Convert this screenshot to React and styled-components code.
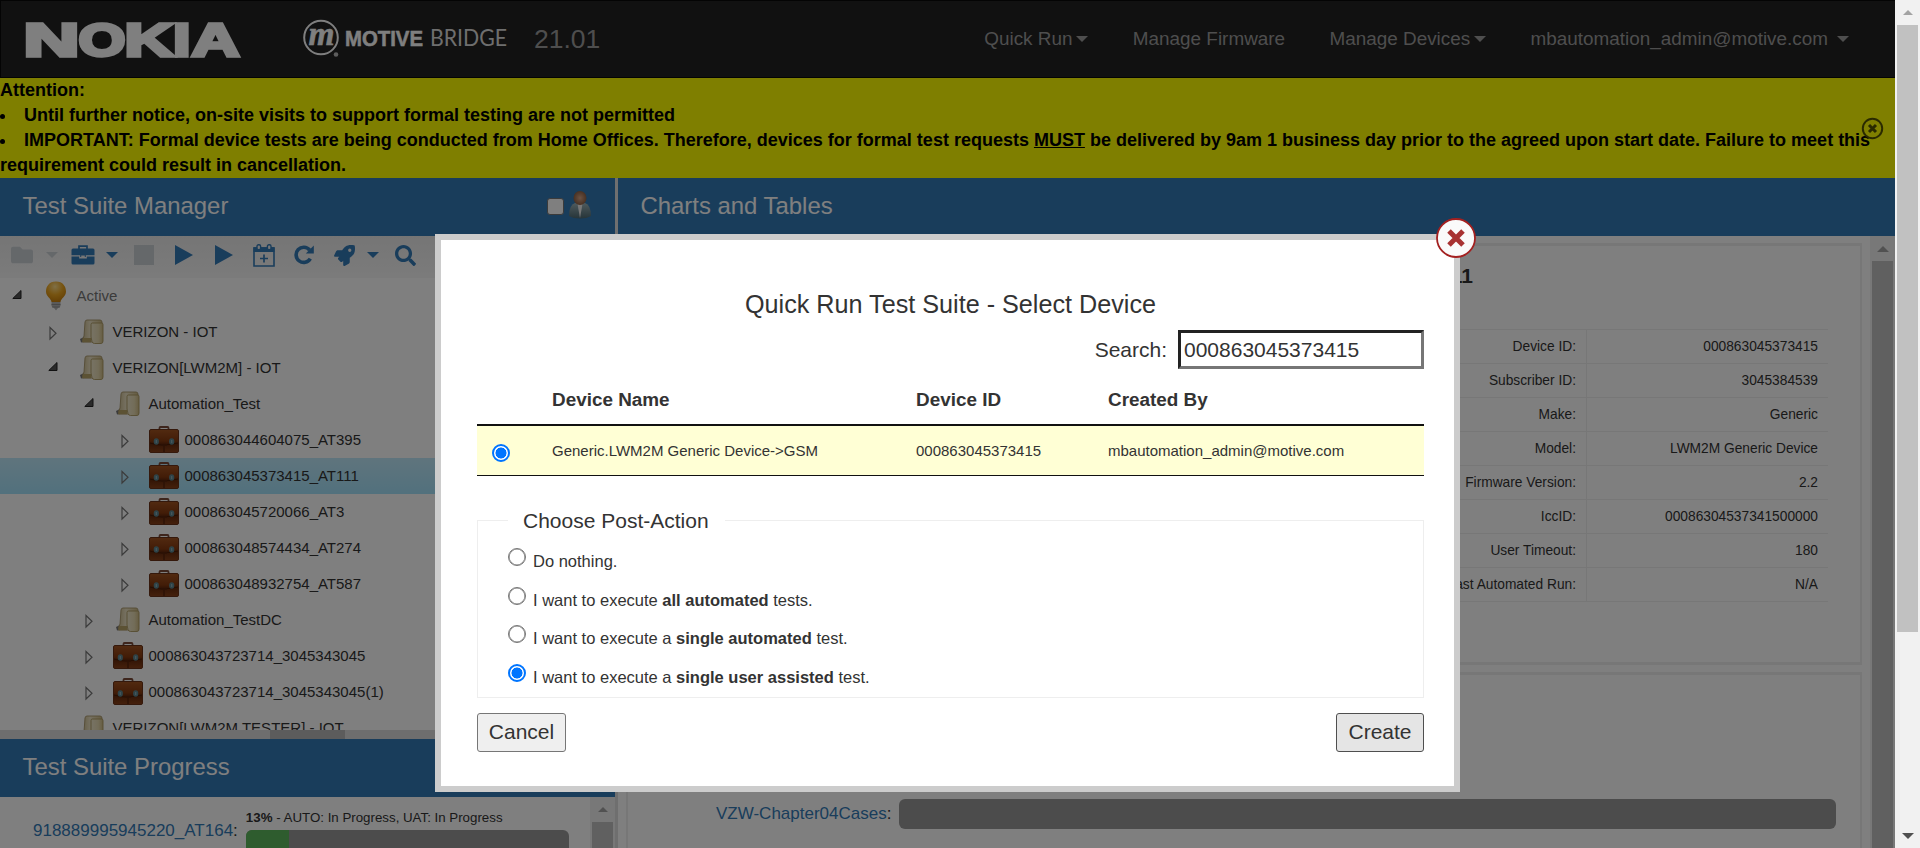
import React from 'react';
import styled, { createGlobalStyle } from 'styled-components';
import { FaFolder, FaRocket, FaSearch } from 'react-icons/fa';

const Global = createGlobalStyle`
  *, *::before, *::after { box-sizing: border-box; }
  body { margin: 0; background: #fff; color: #333; overflow: hidden;
    font-family: "Liberation Sans", Arial, sans-serif; font-size: 15px; }
`;

const Page = styled.div`display: flex; width: 1920px; height: 848px; overflow: hidden;`;
const Content = styled.div`position: relative; width: 1895px; height: 848px; display: flex; flex-direction: column; background: #fff;`;
const Backdrop = styled.div`position: absolute; inset: 0; background: rgba(0, 0, 0, 0.5);`;

/* Scrollbars */
const Track = styled.div`
  width: ${p => p.$w || 25}px; flex: none; align-self: stretch; padding: 0 2px; background: #f1f1f1;
  display: flex; flex-direction: column; align-items: center;
`;
const ArrowCell = styled.div`height: 25px; flex: none; display: flex; align-items: center; justify-content: center;`;
const Thumb = styled.div`width: 21px; background: #c1c1c1; ${p => (p.$h ? `height: ${p.$h}px;` : 'flex: 1;')}`;
const Spacer = styled.div`flex: 1;`;
const Tri = styled.i`
  display: block; width: 0; height: 0;
  border-left: ${p => p.$s}px solid transparent; border-right: ${p => p.$s}px solid transparent;
  ${p => (p.$up ? 'border-bottom' : 'border-top')}: ${p => p.$s}px solid ${p => p.$c || 'currentColor'};
`;

/* Navigation bar */
const Navbar = styled.header`
  height: 78px; flex: none; background: #222; border: 1px solid #080808; border-right: 0;
  display: flex; align-items: center; padding: 0 46px 0 25px; color: #9d9d9d;
`;
const NokiaLogo = styled.svg`width: 217px; height: 60px; display: block; flex: none; overflow: visible;`;
const MotiveLogo = styled.svg`width: 206px; height: 60px; margin-left: 60px; flex: none; overflow: visible;`;
const Version = styled.span`font-size: 26.5px; margin-left: 25px; line-height: 38px;`;
const NavLinks = styled.nav`margin-left: auto; display: flex; gap: 44.4px; font-size: 18.9px; white-space: nowrap;`;
const NavItem = styled.a`display: flex; align-items: center; gap: ${p => p.$gap || 4}px;`;

/* Notice */
const Notice = styled.section`
  position: relative; height: 100px; flex: none; background: #ff0; color: #000;
  font-weight: bold; font-size: 18px; line-height: 25px; white-space: nowrap;
`;
const NoticeItem = styled.div`
  padding-left: 24px; position: relative;
  &::before { content: ''; position: absolute; left: 0; top: 11px; width: 5px; height: 5px; border-radius: 50%; background: #000; }
`;
const NoticeClose = styled.svg`position: absolute; left: 1861px; top: 39px; width: 23px; height: 23px;`;

/* Workspace */
const Workspace = styled.main`flex: 1; min-height: 0; display: flex;`;
const LeftColumn = styled.div`width: 615px; display: flex; flex-direction: column;`;
const Splitter = styled.div`width: 3px; background: #dedede;`;
const RightColumn = styled.div`flex: 1; display: flex; flex-direction: column; min-width: 0;`;
const PanelHeader = styled.div`
  height: 58px; flex: none; background: #337ab7; color: #fff; font-size: 23.9px;
  padding: 0 23px 2px 22.5px; display: flex; align-items: center;
`;
const UserFilter = styled.div`margin-left: auto; display: flex; align-items: center; gap: 4px; padding-bottom: 3px;`;
const FilterBox = styled.span`width: 17px; height: 17px; margin-top: 4px; background: #fff; border: 1px solid #777; border-radius: 3px;`;

const Toolbar = styled.div`
  height: 42px; flex: none; background: linear-gradient(#ebebeb, #f7f7f7); color: #337ab7;
  display: flex; align-items: flex-start; padding: 9px 0 0 11px;
`;
const Tool = styled.span`
  display: flex; align-items: center; justify-content: center; height: 20px;
  width: ${p => p.$w}px; margin-right: ${p => p.$mr}px; flex: none;
  color: ${p => (p.$off ? '#cbd0d5' : '#337ab7')};
`;
const Tree = styled.div`height: 452px; flex: none; overflow: hidden;`;
const TreeRow = styled.div`
  height: 36px; display: flex; align-items: center; padding-left: ${p => 12 + 36 * p.$level}px;
  color: ${p => (p.$muted ? '#777' : '#333')};
  background: ${p => (p.$selected ? 'linear-gradient(#bfe9fb, #a4e2fa)' : 'transparent')};
`;
const Toggle = styled.span`width: 10px; height: 14px; margin-right: 19px; display: flex;`;
const NodeIcon = styled.span`width: 30px; height: 32px; margin-right: 5.5px; display: flex; justify-content: center; align-items: center;`;
const NodeLabel = styled.span`padding-bottom: 2px;`;
const HSplit = styled.div`height: 9px; flex: none; background: #dcdcdc; padding-left: 270px;`;
const HGrip = styled.div`width: 75px; height: 9px; background: #b8b8b8;`;

const ProgressPanel = styled.div`flex: 1; min-height: 0; display: flex; overflow: hidden;`;
const ProgressBody = styled.div`width: 590px; display: flex; padding: 12px 0 0 33px;`;
const RowLabel = styled.div`font-size: 17px; a { color: #337ab7; }`;
const RunLabel = styled(RowLabel)`padding-top: 12px;`;
const ProgressInfo = styled.div`margin-left: 8px; width: 323px; font-size: 13.3px; line-height: 18px; white-space: nowrap;`;
const Bar = styled.div`height: ${p => p.$h}px; background: #999; border-radius: 6px; overflow: hidden;`;
const RunBar = styled(Bar)`margin-top: 3px;`;
const Fill = styled.div`height: 100%; background: #5cb85c;`;

const ChartsBody = styled.div`flex: 1; min-height: 0; display: flex; overflow: hidden;`;
const Cards = styled.div`flex: 1; padding: 7px 8px 0; display: flex; flex-direction: column; gap: 7px;`;
const Card = styled.div`
  flex: none; height: ${p => p.$h}px; border: 3px solid #efefef; border-left-width: 2px; border-right-width: 2px;
  display: flex; flex-direction: column; align-items: flex-end;
`;
const CardTitle = styled.div`font-size: 21px; font-weight: bold; margin: 18px 387px 0 0; line-height: 24px;`;
const DetailTable = styled.div`width: 700px; margin: 41px 32px 0 0; border-top: 1px solid #efefef; font-size: 13.75px;`;
const DetailRow = styled.div`height: 34px; display: flex; border-bottom: 1px solid #efefef; line-height: 34px; text-align: right;`;
const DetailKey = styled.div`flex: 1; padding-right: 10px; border-right: 1px solid #efefef;`;
const DetailValue = styled.div`width: 241px; padding-right: 10px;`;
const ChapterRow = styled.div`width: 1208px; margin: 124px 23px 0 0; display: flex; align-items: center; padding-left: 87px;`;
const ChapterBar = styled(Bar)`width: 937px; margin: 0 1px 0 auto;`;

/* Dialog */
const Dialog = styled.section`
  position: absolute; left: 435px; top: 234px; width: 1025px; height: 558px;
  background: #fff; border: 6px solid #ccc; padding: 50px 30px 0 36px; display: flex; flex-direction: column;
`;
const DialogClose = styled.svg`position: absolute; right: -22px; top: -22px; width: 40px; height: 40px;`;
const DialogTitle = styled.h2`margin: 0; font-size: 25.2px; line-height: 28px; font-weight: normal; text-align: center;`;
const SearchRow = styled.label`display: flex; justify-content: flex-end; align-items: center; gap: 11px; margin-top: 12px; font-size: 21px;`;
const SearchInput = styled.input`
  width: 246px; height: 39px; padding: 0 3px; font: inherit; color: #333; outline: 0; border-radius: 0; background: #fff;
  border: 3px solid; border-color: #222 #767676 #767676 #222;
`;
const DeviceGrid = styled.div`
  display: grid; grid-template-columns: 75px 364px 192px 1fr; align-items: center;
`;
const DeviceHead = styled(DeviceGrid)`height: 57px; font-size: 18.9px; font-weight: bold; border-bottom: 2px solid #111; padding-top: 6px;`;
const DeviceRow = styled(DeviceGrid)`height: 50px; background: #ffffd5; border-bottom: 1px solid #111; font-size: 15px;`;
const Radio = styled.span`
  display: block; width: 18px; height: 18px; border-radius: 50%; flex: none; background: #fff;
  border: ${p => (p.$on ? '2px solid #0075ff' : '1px solid #767676')};
  ${p => (p.$on
    ? 'background: radial-gradient(circle, #0075ff 5.2px, #fff 5.8px);'
    : 'box-shadow: inset 0 0 0 0.6px #767676;')}
`;
const RadioCell = styled.div`padding: 4px 0 0 15px;`;
const PostActions = styled.fieldset`
  margin: 32px 0 0; padding: 0 0 0 30px; border: 1px solid #eee; height: 190px; min-width: 0;
  display: block;
`;
const Legend = styled.legend`padding: 0 16px 0 15px; font-size: 21px; line-height: 25px;`;
const Option = styled.label`display: flex; gap: 7px; height: 38.7px; font-size: 16.5px; line-height: 20px; white-space: pre; align-items: flex-start;`;
const OptionText = styled.span`padding-top: 3px;`;
const Options = styled.div`padding-top: 15px;`;
const Actions = styled.div`display: flex; justify-content: space-between; margin-top: 15px;`;
const Button = styled.button`
  width: ${p => p.$w}px; height: 39px; padding: 0 0 1px; font: 21px "Liberation Sans", Arial, sans-serif; color: #333;
  background: ${p => (p.$active ? '#e5e5e5' : '#efefef')}; border: 1px solid ${p => (p.$active ? '#4f4f4f' : '#767676')}; border-radius: 3px;
`;

const FolderNode = () => (
  <svg width="24" height="26" viewBox="0 0 24 26">
    <defs>
      <linearGradient id="back" x1="0" x2="1"><stop offset="0" stopColor="#c9b98c" /><stop offset=".4" stopColor="#ece2c4" /><stop offset="1" stopColor="#cbb883" /></linearGradient>
      <linearGradient id="front" x1="0" x2="1"><stop offset="0" stopColor="#efe7cb" /><stop offset=".6" stopColor="#e6dab2" /><stop offset="1" stopColor="#cdb983" /></linearGradient>
    </defs>
    <path d="M0 20l4-2v5l-3 .5z" fill="#777" />
    <path d="M5 3q.3-2 2-2h13q1.800 0 2 2v20H2.500q-.5-3 1.500-6z" fill="url(#back)" stroke="#a8966a" strokeWidth=".9" />
    <path d="M3 19h8v4.300H2.500z" fill="#b8a468" />
    <path d="M11 5.500q0-1.500 1.500-1.500h9q1.500 0 1.500 1.500V22q0 2.500-2 2.500h-6.500q-2 0-2.500-2L11 18z" fill="url(#front)" stroke="#ab9860" strokeWidth=".9" />
  </svg>
);
const CaseNode = () => (
  <svg width="30" height="28" viewBox="0 0 30 28">
    <defs>
      <linearGradient id="leather" x1="0" x2="0" y1="0" y2="1"><stop offset="0" stopColor="#a45522" /><stop offset=".5" stopColor="#85390f" /><stop offset=".62" stopColor="#662a0c" /><stop offset="1" stopColor="#8a421a" /></linearGradient>
    </defs>
    <path d="M10.500 4V2q0-1 1-1h7q1 0 1 1v2" fill="none" stroke="#7b4a38" strokeWidth="1.800" />
    <rect x=".5" y="3.500" width="29" height="23" rx="1.500" fill="url(#leather)" stroke="#6b3318" />
    <path d="M1 17q7 2.500 14 2t14-2" fill="none" stroke="#4a1c06" />
    <path d="M12 19h6M15 19v7" stroke="#5a250c" strokeWidth="1.500" />
    <ellipse cx="7.300" cy="15.500" rx="2.600" ry="3.300" fill="#5d8791" /><ellipse cx="22.700" cy="15.500" rx="2.600" ry="3.300" fill="#5d8791" />
    <path d="M7.300 14v3M22.700 14v3" stroke="#8fb0b8" strokeWidth="1.200" />
  </svg>
);
const BulbNode = () => (
  <svg width="22" height="30" viewBox="0 0 22 30">
    <defs><radialGradient id="bulb" cx=".45" cy=".25" r=".8"><stop offset="0" stopColor="#ffdf8d" /><stop offset=".5" stopColor="#eda721" /><stop offset="1" stopColor="#c47a08" /></radialGradient></defs>
    <path d="M11 .5C4 .5 1 5.500 1 10.500c0 5 5 6.500 5.500 10.500h9C16 17 21 15.500 21 10.500 21 5.500 18 .5 11 .5z" fill="url(#bulb)" />
    <path d="M6.500 21h9v4q-1 1.500-2.500 2l-2 2.500-2-2.500q-1.500-.5-2.500-2z" fill="#b5b5b5" />
    <path d="M6.500 23.500h9M7 26h8" stroke="#888" strokeWidth=".8" />
  </svg>
);
const OpenArrow = () => <svg width="10" height="12" viewBox="0 0 10 12"><path d="M9 1.500v8H.8z" fill="#555" stroke="#222" /></svg>;
const ShutArrow = () => <svg width="10" height="16" viewBox="0 0 10 16"><path d="M2 2.500v11.500l6-5.750z" fill="none" stroke="#777" strokeWidth="1.200" /></svg>;
const CaseTool = () => (
  <svg width="24" height="20" viewBox="0 0 24 20">
    <path d="M8 4V1.200h8V4" fill="none" stroke="currentColor" strokeWidth="1.700" />
    <path d="M2 3.500h20q1.500 0 1.500 1.500v5.200h-8.700V12H9.200v-1.800H.5V5Q.5 3.500 2 3.500zM.5 11.500h7.700v2h7.600v-2h7.700v6.500q0 1.500-1.500 1.500H2Q.5 19.500.5 18z" fill="currentColor" />
    <path d="M10.200 10.500h3.600v1.500h-3.600z" fill="#eee" />
  </svg>
);
const PlayTool = () => <svg width="18" height="20" viewBox="0 0 18 20"><path d="M0 0l18 10L0 20z" fill="currentColor" /></svg>;
const StopTool = () => <svg width="20" height="20"><rect width="20" height="20" fill="currentColor" /></svg>;
const CalendarTool = () => (
  <svg width="22" height="23" viewBox="0 0 22 23">
    <path d="M1 4h20v18H1z" fill="none" stroke="currentColor" strokeWidth="1.600" />
    <path d="M.5 3.200h21V8H.5z" fill="currentColor" />
    <rect x="4" y=".8" width="3.600" height="5" rx="1.500" fill="#eee" stroke="currentColor" strokeWidth="1.400" />
    <rect x="14.400" y=".8" width="3.600" height="5" rx="1.500" fill="#eee" stroke="currentColor" strokeWidth="1.400" />
    <path d="M11 10.500v8M7 14.500h8" stroke="currentColor" strokeWidth="1.700" />
  </svg>
);
const RefreshTool = () => (
  <svg width="20" height="20" viewBox="0 0 20 20">
    <path d="M16.300 13.600A7.600 7.600 0 1 1 15.600 5" fill="none" stroke="currentColor" strokeWidth="3.600" />
    <path d="M19.800.6v8h-8z" fill="currentColor" />
  </svg>
);
const UserIcon = () => (
  <svg width="24" height="28" viewBox="0 0 24 28">
    <defs>
      <radialGradient id="head"><stop offset="0" stopColor="#d8a587" /><stop offset="1" stopColor="#8f6246" /></radialGradient>
      <linearGradient id="torso" x1="0" x2="0" y1="0" y2="1"><stop offset="0" stopColor="#9db4ba" /><stop offset="1" stopColor="#4d6a72" /></linearGradient>
    </defs>
    <path d="M1 25q0-11 6-13h10q6 2 6 13-4 2.500-11 2.500T1 25z" fill="url(#torso)" />
    <path d="M9.500 13l2.500 14 2.500-14z" fill="#eee" />
    <ellipse cx="12" cy="7" rx="6.500" ry="7" fill="url(#head)" />
  </svg>
);

const nodes = [
  [0, 'open', 'bulb', 'Active'],
  [1, 'shut', 'folder', 'VERIZON - IOT'],
  [1, 'open', 'folder', 'VERIZON[LWM2M] - IOT'],
  [2, 'open', 'folder', 'Automation_Test'],
  [3, 'shut', 'case', '000863044604075_AT395'],
  [3, 'shut', 'case', '000863045373415_AT111', true],
  [3, 'shut', 'case', '000863045720066_AT3'],
  [3, 'shut', 'case', '000863048574434_AT274'],
  [3, 'shut', 'case', '000863048932754_AT587'],
  [2, 'shut', 'folder', 'Automation_TestDC'],
  [2, 'shut', 'case', '000863043723714_3045343045'],
  [2, 'shut', 'case', '000863043723714_3045343045(1)'],
  [1, '', 'folder', 'VERIZON[LWM2M TESTER] - IOT'],
];
const details = [
  ['Device ID:', '000863045373415'], ['Subscriber ID:', '3045384539'], ['Make:', 'Generic'],
  ['Model:', 'LWM2M Generic Device'], ['Firmware Version:', '2.2'], ['IccID:', '00086304537341500000'],
  ['User Timeout:', '180'], ['Last Automated Run:', 'N/A'],
];
const icons = { bulb: <BulbNode />, folder: <FolderNode />, case: <CaseNode /> };
const sans = '"Liberation Sans", Arial, sans-serif';
/* letter, left edge, advance */
const nokia = [['N', -2.5, 56], ['O', 52.5, 47], ['K', 98.5, 49], ['I', 147, 17.5], ['A', 165.5, 48]];

export default function App() {
  return (
    <Page>
      <Global />
      <Content>
        <Navbar>
          <NokiaLogo viewBox="0 0 217 60">
            <text y="46.500" fontFamily={sans} fontWeight="bold" fontSize="46" fill="#fff" stroke="#fff" strokeWidth="3.400">
              {nokia.map(([ch, x, w]) => <tspan key={ch} x={x} textLength={w} lengthAdjust="spacingAndGlyphs">{ch}</tspan>)}
            </text>
          </NokiaLogo>
          <MotiveLogo viewBox="0 0 206 60">
            <circle cx="18" cy="28.500" r="16.800" fill="none" stroke="#fff" strokeWidth="2" />
            <text x="5.500" y="35.500" textLength="26" lengthAdjust="spacingAndGlyphs" fontFamily='"Liberation Serif", serif' fontStyle="italic" fontWeight="bold" fontSize="33" fill="#fff" stroke="#fff" strokeWidth=".5">m</text>
            <circle cx="33" cy="45.500" r="2.300" fill="#bbb" />
            <text x="42" y="37" textLength="78" lengthAdjust="spacingAndGlyphs" fontFamily={sans} fontWeight="bold" fontSize="22.500" fill="#fff" stroke="#fff" strokeWidth=".5">MOTIVE</text>
            <text x="127" y="37" textLength="77" lengthAdjust="spacingAndGlyphs" fontFamily="Lato, sans-serif" fontSize="22.500" fill="#ddd">BRIDGE</text>
          </MotiveLogo>
          <Version>21.01</Version>
          <NavLinks>
            <NavItem>Quick Run<Tri $s={6} /></NavItem>
            <NavItem>Manage Firmware</NavItem>
            <NavItem>Manage Devices<Tri $s={6} /></NavItem>
            <NavItem $gap={9}>mbautomation_admin@motive.com<Tri $s={6} /></NavItem>
          </NavLinks>
        </Navbar>

        <Notice>
          <div>Attention:</div>
          <NoticeItem>Until further notice, on-site visits to support formal testing are not permitted</NoticeItem>
          <NoticeItem>IMPORTANT: Formal device tests are being conducted from Home Offices. Therefore, devices for formal test requests <u>MUST</u> be delivered by 9am 1 business day prior to the agreed upon start date. Failure to meet this</NoticeItem>
          <div>requirement could result in cancellation.</div>
          <NoticeClose viewBox="0 0 23 23">
            <circle cx="11.500" cy="11.500" r="9.700" fill="none" stroke="#555500" strokeWidth="2" />
            <path d="M8 8l7 7M15 8l-7 7" stroke="#555500" strokeWidth="3" />
          </NoticeClose>
        </Notice>

        <Workspace>
          <LeftColumn>
            <PanelHeader>
              Test Suite Manager
              <UserFilter><FilterBox /><UserIcon /></UserFilter>
            </PanelHeader>
            <Toolbar>
              <Tool $w={22} $mr={13} $off><FaFolder size={22} /></Tool>
              <Tool $w={12} $mr={13} $off><Tri $s={6} /></Tool>
              <Tool $w={24} $mr={11}><CaseTool /></Tool>
              <Tool $w={12} $mr={16}><Tri $s={6} /></Tool>
              <Tool $w={20} $mr={21} $off><StopTool /></Tool>
              <Tool $w={18} $mr={22}><PlayTool /></Tool>
              <Tool $w={18} $mr={20}><PlayTool /></Tool>
              <Tool $w={22} $mr={19}><CalendarTool /></Tool>
              <Tool $w={20} $mr={20}><RefreshTool /></Tool>
              <Tool $w={21} $mr={12}><FaRocket size={21} /></Tool>
              <Tool $w={12} $mr={16}><Tri $s={6} /></Tool>
              <Tool $w={21} $mr={0}><FaSearch size={21} /></Tool>
            </Toolbar>
            <Tree>
              {nodes.map(([level, state, icon, label, selected]) => (
                <TreeRow key={label} $level={level} $selected={selected} $muted={level === 0}>
                  <Toggle>{state === 'open' && <OpenArrow />}{state === 'shut' && <ShutArrow />}</Toggle>
                  <NodeIcon>{icons[icon]}</NodeIcon>
                  <NodeLabel>{label}</NodeLabel>
                </TreeRow>
              ))}
            </Tree>
            <HSplit><HGrip /></HSplit>
            <PanelHeader>Test Suite Progress</PanelHeader>
            <ProgressPanel>
              <ProgressBody>
                <RunLabel><a>918889995945220_AT164</a>:</RunLabel>
                <ProgressInfo>
                  <b>13%</b> - AUTO: In Progress, UAT: In Progress
                  <RunBar $h={30}><Fill style={{ width: '13.3%' }} /></RunBar>
                </ProgressInfo>
              </ProgressBody>
              <Track>
                <ArrowCell><Tri $s={5.5} $up $c="#a3a3a3" /></ArrowCell>
                <Thumb />
              </Track>
            </ProgressPanel>
          </LeftColumn>
          <Splitter />
          <RightColumn>
            <PanelHeader>Charts and Tables</PanelHeader>
            <ChartsBody>
              <Cards>
                <Card $h={422}>
                  <CardTitle>000863045373415_AT111</CardTitle>
                  <DetailTable>
                    {details.map(([k, v]) => (
                      <DetailRow key={k}><DetailKey>{k}</DetailKey><DetailValue>{v}</DetailValue></DetailRow>
                    ))}
                  </DetailTable>
                </Card>
                <Card $h={300}>
                  <ChapterRow>
                    <RowLabel><a>VZW-Chapter04Cases</a>:</RowLabel>
                    <ChapterBar $h={30} />
                  </ChapterRow>
                </Card>
              </Cards>
              <Track>
                <ArrowCell><Tri $s={6} $up $c="#a3a3a3" /></ArrowCell>
                <Thumb />
              </Track>
            </ChartsBody>
          </RightColumn>
        </Workspace>

        <Backdrop />

        <Dialog>
          <DialogTitle>Quick Run Test Suite - Select Device</DialogTitle>
          <SearchRow>Search:<SearchInput defaultValue="000863045373415" /></SearchRow>
          <DeviceHead><span /><span>Device Name</span><span>Device ID</span><span>Created By</span></DeviceHead>
          <DeviceRow>
            <RadioCell><Radio $on /></RadioCell>
            <span>Generic.LWM2M Generic Device-&gt;GSM</span>
            <span>000863045373415</span>
            <span>mbautomation_admin@motive.com</span>
          </DeviceRow>
          <PostActions>
            <Legend>Choose Post-Action</Legend>
            <Options>
              <Option><Radio /><OptionText>Do nothing.</OptionText></Option>
              <Option><Radio /><OptionText>I want to execute <b>all automated</b> tests.</OptionText></Option>
              <Option><Radio /><OptionText>I want to execute a <b>single automated</b> test.</OptionText></Option>
              <Option><Radio $on /><OptionText>I want to execute a <b>single user assisted</b> test.</OptionText></Option>
            </Options>
          </PostActions>
          <Actions>
            <Button $w={89}>Cancel</Button>
            <Button $w={88} $active>Create</Button>
          </Actions>
          <DialogClose viewBox="0 0 40 40">
            <circle cx="20" cy="20" r="19" fill="#fafafa" stroke="#a32020" strokeWidth="1.800" />
            <path d="M13 13l14 14M27 13L13 27" stroke="#a83232" strokeWidth="5" />
          </DialogClose>
        </Dialog>
      </Content>
      <Track>
        <ArrowCell><Tri $s={5.5} $up $c="#a3a3a3" /></ArrowCell>
        <Thumb $h={607} />
        <Spacer />
        <ArrowCell><Tri $s={6} $c="#505050" /></ArrowCell>
      </Track>
    </Page>
  );
}
